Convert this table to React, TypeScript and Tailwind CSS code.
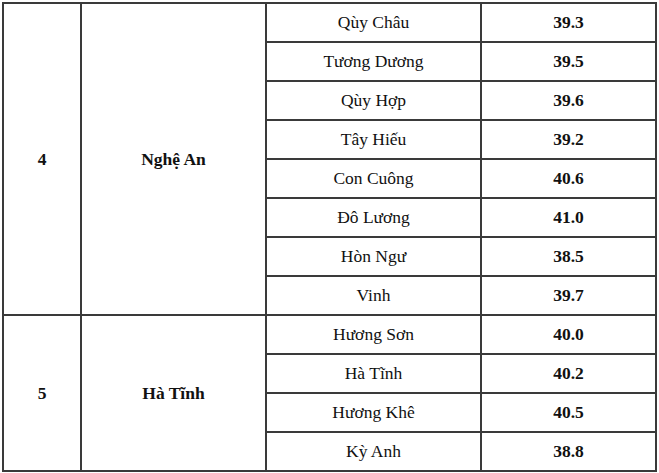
import React from "react";

const groups = [
  {
    no: "4",
    prov: "Nghệ An",
    span: "row-span-8",
    rows: [
      ["Qùy Châu", "39.3"],
      ["Tương Dương", "39.5"],
      ["Qùy Hợp", "39.6"],
      ["Tây Hiếu", "39.2"],
      ["Con Cuông", "40.6"],
      ["Đô Lương", "41.0"],
      ["Hòn Ngư", "38.5"],
      ["Vinh", "39.7"],
    ],
  },
  {
    no: "5",
    prov: "Hà Tĩnh",
    span: "row-span-4",
    rows: [
      ["Hương Sơn", "40.0"],
      ["Hà Tĩnh", "40.2"],
      ["Hương Khê", "40.5"],
      ["Kỳ Anh", "38.8"],
    ],
  },
];

function Cell({ className, children }: { className: string; children: React.ReactNode }) {
  return (
    <div className={"bg-white flex items-center justify-center " + className}>
      <span className="font-['Liberation_Serif',serif] text-[17.5px] text-[#111]">{children}</span>
    </div>
  );
}

export default function App() {
  return (
    <div className="w-[659px] h-[473px] bg-white overflow-hidden pt-[2px] pl-[2px]">
      <div className="grid w-max grid-cols-[76px_183px_213px_173px] grid-rows-[repeat(12,37px)] gap-[2px] p-[2px] bg-[#3a3a3a]">
        {groups.map((g) => (
          <React.Fragment key={g.no}>
            <Cell className={"col-start-1 font-bold " + g.span}>{g.no}</Cell>
            <Cell className={"col-start-2 font-bold " + g.span}>{g.prov}</Cell>
            {g.rows.map((r) => (
              <React.Fragment key={r[0]}>
                <Cell className="col-start-3">{r[0]}</Cell>
                <Cell className="col-start-4 font-bold">{r[1]}</Cell>
              </React.Fragment>
            ))}
          </React.Fragment>
        ))}
      </div>
    </div>
  );
}
